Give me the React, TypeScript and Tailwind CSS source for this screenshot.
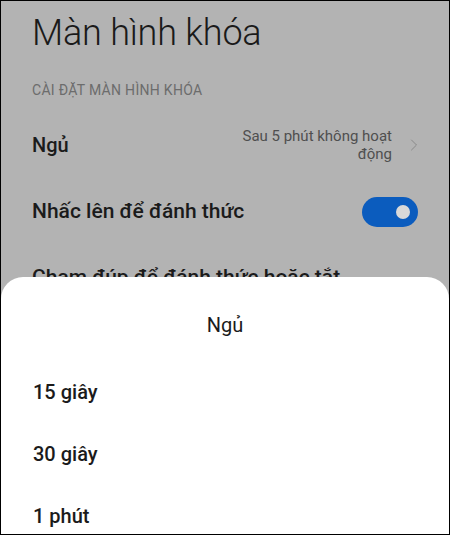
import { ChevronRight } from 'lucide-react';

const OPTIONS = ['15 giây', '30 giây', '1 phút'];

export default function App() {
  return (
    <div
      className="relative h-[535px] w-[450px] overflow-hidden border border-black bg-[#b3b3b3] text-[#1b1b1b]"
      style={{ fontFamily: 'Roboto, "Noto Sans", sans-serif' }}
    >
      {/* ---- trang cài đặt (bị làm mờ) ---- */}
      <div className="px-[31px] pt-[11px]">
        <h1 className="text-[36px] font-light leading-[42px] tracking-[-0.2px] text-[#1a1a1a]">
          Màn hình khóa
        </h1>
        <p className="mt-[28px] text-[14px] leading-4 tracking-[0.3px] text-[#6c6c6c]">
          CÀI ĐẶT MÀN HÌNH KHÓA
        </p>

        <div className="mt-[29px] flex items-center justify-between">
          <span className="text-[20px] font-medium">Ngủ</span>
          <div className="flex items-center gap-[12px]">
            <p className="w-[172px] text-right text-[15px] leading-[18px] text-[#4f4f4f]">
              Sau 5 phút không hoạt động
            </p>
            <ChevronRight size={20} strokeWidth={1.2} className="-mr-[6px] text-[#8a8a8a]" />
          </div>
        </div>

        <div className="mt-[33px] flex items-center justify-between">
          <span className="text-[21px] font-medium">Nhấc lên để đánh thức</span>
          <span className="flex h-[30px] w-[56px] items-center justify-end rounded-full bg-[#0b5cbe] pr-[8px]">
            <span className="h-[14px] w-[14px] rounded-full bg-[#d9d9d9]" />
          </span>
        </div>

        <p className="mt-[34px] text-[21px] font-medium">Chạm đúp để đánh thức hoặc tắt</p>
      </div>

      {/* ---- bảng chọn ---- */}
      <div className="absolute inset-x-0 bottom-0 top-[276px] rounded-t-[22px] bg-white">
        <p className="pt-[36px] text-center text-[20px] leading-6">Ngủ</p>
        <ul className="mt-[43px] flex flex-col gap-[38px] px-[32px]">
          {OPTIONS.map((o) => (
            <li key={o} className="text-[20px] font-medium leading-6">
              {o}
            </li>
          ))}
        </ul>
      </div>
    </div>
  );
}
